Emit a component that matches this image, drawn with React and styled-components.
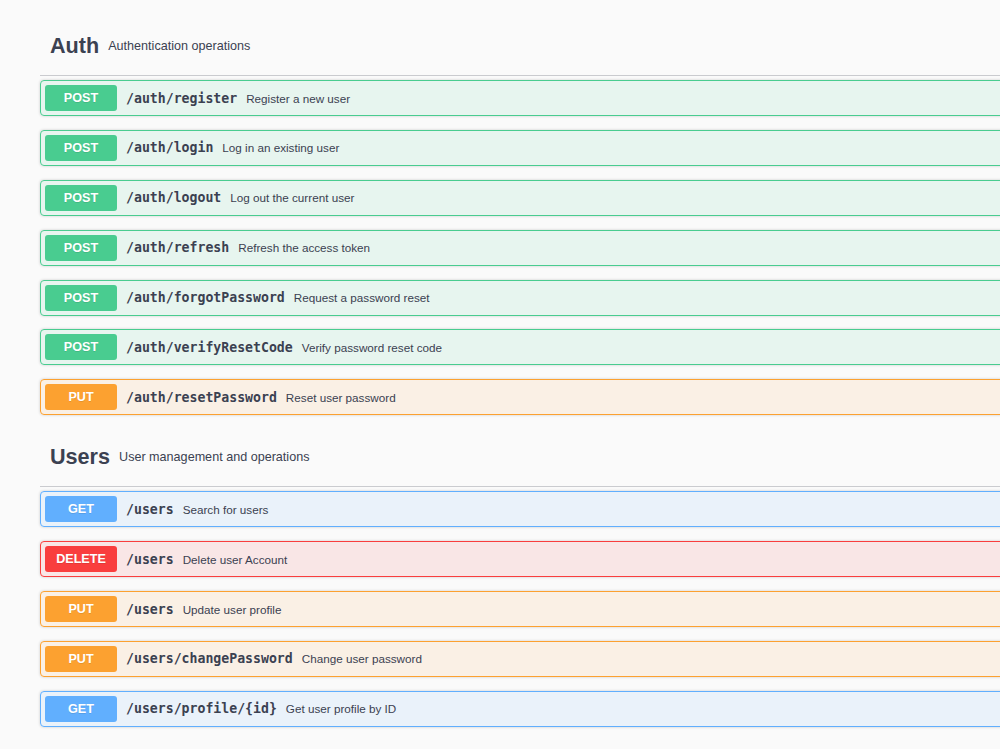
import React from "react";
import styled, { createGlobalStyle } from "styled-components";

const GlobalStyle = createGlobalStyle`
  html, body {
    margin: 0;
    padding: 0;
    background: #fafafa;
    overflow: hidden;
  }
  body {
    font-family: "Liberation Sans", Arial, sans-serif;
    color: #3b4151;
  }
`;

const METHOD_COLORS = {
  POST: "73, 204, 144",
  PUT: "252, 161, 48",
  GET: "97, 175, 254",
  DELETE: "249, 62, 62",
};

const Wrapper = styled.div`
  width: 1100px;
  padding: 18px 0 0 40px;
`;

const TagSection = styled.section`
  margin-bottom: 0;
`;

const TagHeader = styled.h3`
  display: flex;
  align-items: center;
  height: 58px;
  margin: 0 0 4px;
  padding: 0 0 2px 10px;
  box-sizing: border-box;
  border-bottom: 1px solid rgba(59, 65, 81, 0.25);
`;

const TagName = styled.span`
  font-size: 21.6px;
  font-weight: 700;
  color: #3b4151;
`;

const TagDescr = styled.small`
  font-size: 12.6px;
  font-weight: 400;
  color: #3b4151;
  padding: 0 9px;
`;

const OpBlock = styled.div`
  display: flex;
  align-items: center;
  height: 36px;
  box-sizing: border-box;
  padding: 0 4px;
  margin-bottom: 13.9px;
  border: 1px solid ${(p) => `rgb(${METHOD_COLORS[p.$method]})`};
  background: ${(p) => `rgba(${METHOD_COLORS[p.$method]}, 0.1)`};
  border-radius: 4px;
  box-shadow: 0 0 3px rgba(0, 0, 0, 0.19);
`;

const Method = styled.span`
  display: flex;
  align-items: center;
  justify-content: center;
  width: 72px;
  height: 26px;
  flex-shrink: 0;
  border-radius: 3px;
  background: ${(p) => `rgb(${METHOD_COLORS[p.$method]})`};
  color: #fff;
  font-size: 12.6px;
  font-weight: 700;
  text-shadow: 0 1px 0 rgba(0, 0, 0, 0.1);
`;

const Path = styled.span`
  padding: 0 9px;
  font-family: "DejaVu Sans Mono", monospace;
  font-size: 13.2px;
  font-weight: 700;
  color: #3b4151;
`;

const Summary = styled.span`
  font-size: 11.7px;
  color: #3b4151;
`;

const tags = [
  {
    name: "Auth",
    descr: "Authentication operations",
    ops: [
      ["POST", "/auth/register", "Register a new user"],
      ["POST", "/auth/login", "Log in an existing user"],
      ["POST", "/auth/logout", "Log out the current user"],
      ["POST", "/auth/refresh", "Refresh the access token"],
      ["POST", "/auth/forgotPassword", "Request a password reset"],
      ["POST", "/auth/verifyResetCode", "Verify password reset code"],
      ["PUT", "/auth/resetPassword", "Reset user password"],
    ],
  },
  {
    name: "Users",
    descr: "User management and operations",
    ops: [
      ["GET", "/users", "Search for users"],
      ["DELETE", "/users", "Delete user Account"],
      ["PUT", "/users", "Update user profile"],
      ["PUT", "/users/changePassword", "Change user password"],
      ["GET", "/users/profile/{id}", "Get user profile by ID"],
    ],
  },
];

export default function App() {
  return (
    <>
      <GlobalStyle />
      <Wrapper>
        {tags.map((tag) => (
          <TagSection key={tag.name}>
            <TagHeader>
              <TagName>{tag.name}</TagName>
              <TagDescr>{tag.descr}</TagDescr>
            </TagHeader>
            {tag.ops.map(([method, path, summary]) => (
              <OpBlock key={method + path} $method={method}>
                <Method $method={method}>{method}</Method>
                <Path>{path}</Path>
                <Summary>{summary}</Summary>
              </OpBlock>
            ))}
          </TagSection>
        ))}
      </Wrapper>
    </>
  );
}
